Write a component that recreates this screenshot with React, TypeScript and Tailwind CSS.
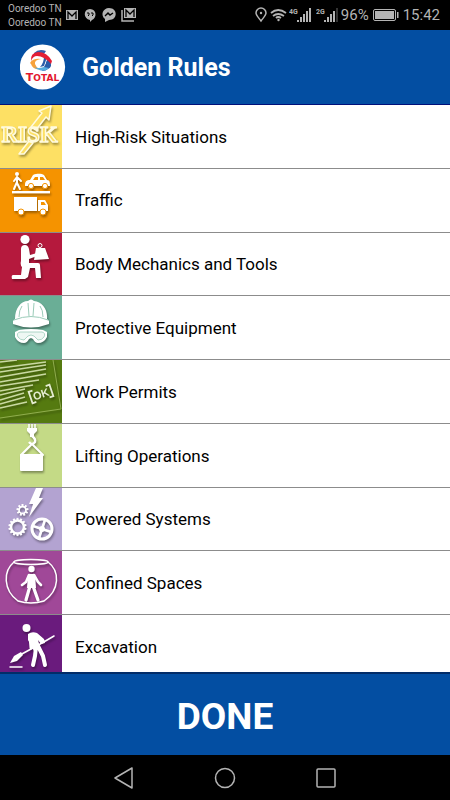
import type { ReactNode } from "react";

type Rule = {
  title: string;
  tile: string;
  icon: ReactNode;
};

function Gear({ x, y, r, teeth, width }: { x: number; y: number; r: number; teeth: number; width: number }) {
  const step = 360 / teeth;
  return (
    <g transform={`translate(${x} ${y})`}>
      <circle r={r} fill="none" stroke="white" strokeWidth={width} />
      {Array.from({ length: teeth }, (_, i) => (
        <rect key={i} x="-1" y={-r - 2.6} width="2" height="2.6" fill="white" transform={`rotate(${i * step})`} />
      ))}
    </g>
  );
}

const RISK = (
  <g strokeLinejoin="round">
    <path d="M19 49 29 36 33 38 24 49ZM31 22 42 8 39 6 51 1 49 15 46 12 36 25Z" fill="#fde064" stroke="#fffbe0" strokeWidth="1.5" />
    <text
      x="29.500"
      y="37"
      textAnchor="middle"
      fontFamily="Liberation Serif, serif"
      fontWeight="700"
      fontSize="23"
      fill="#fde064"
      stroke="#fffbe0"
      strokeWidth="1.5"
    >
      RISK
    </text>
  </g>
);

const TRAFFIC = (
  <g fill="white">
    <circle cx="17" cy="5" r="2" />
    <path
      d="M17 8v6l3 6M17 13l-3 7M17 8l-3 4M17 8l4 4"
      fill="none"
      stroke="white"
      strokeWidth="2"
      strokeLinecap="round"
    />
    <path d="M25 16c0-4 2-5 5-5l3-5c5-2 9-1 11 0l3 5c3 0 3 3 3 6H25Z" />
    <path d="M33 11l2-3h3v3ZM40 8h3l2 3h-5Z" fill="#f59300" />
    <circle cx="31" cy="17" r="2.6" stroke="#f59300" />
    <circle cx="45" cy="17" r="2.6" stroke="#f59300" />
    <rect x="12" y="22" width="38" height="2.4" />
    <rect x="14" y="28" width="23" height="14" />
    <path d="M38 31h7l3 5v6H38Z" />
    <path d="M41 33h3l2 3h-5Z" fill="#f59300" />
    <circle cx="21" cy="43" r="3" stroke="#f59300" />
    <circle cx="43" cy="43" r="3" stroke="#f59300" />
  </g>
);

const BODY = (
  <g fill="white">
    <circle cx="25" cy="6.500" r="4.600" />
    <path d="M21 16q0-4 4-4 3 0 4 4l1 6 7-2v3l-8 3v4h9q2 0 2 2l1 13h-5l-1-10h-5l-2 9-3 2H12q-1-4 1-4h8l1-8q-2-2-1-6Z" />
    <path d="M36 15h9l4 11-15 1Z" />
    <circle cx="40" cy="12.500" r="2" fill="none" stroke="white" strokeWidth="1" />
  </g>
);

const HELMET = (
  <g fill="white">
    <path d="M15 23C15 12 21 5 28 5q3-3 6 0c8 1 14 8 13 18l2 2v3q-18 7-36 0v-3Z" />
    <path
      d="M14 24q17-7 34 0M28 7l1 13M34 7l-1 13M22 10q-3 4-3 11M40 10q3 4 3 11"
      fill="none"
      stroke="#9bccb9"
      strokeWidth="1"
    />
    <path d="M19 34q12-2 24 0l4 2v5q-3 6-9 6-3 0-5-4l-2-1-2 1q-2 4-5 4-6 0-9-6v-5Z" />
    <path
      d="M20 36h22q4 1 2 5-2 3-6 3l-4-4-3-1-3 1-4 4q-4 0-6-3-2-4 2-5Z"
      fill="#eef7f3"
      stroke="#9bccb9"
      strokeWidth="0.8"
    />
  </g>
);

const PERMIT = (
  <g fill="none" stroke="#c9d8a2">
    <path
      d="M0 2 17 0M0 8 46 2M0 12 46 5M0 17 46 9M0 22 46 14M0 26 39 20M0 31 33 25M0 35 25 29M0 40 24 33M0 44 25 37M0 48 27 42"
      strokeWidth="1.500"
    />
    <path d="M53 0 61 49 0 58" stroke="#90ad4e" strokeWidth="1" />
    <g transform="translate(41 34) rotate(-19)" stroke="#e4ecd0">
      <path d="M-7-6h-4V6h4M7-6h4V6H7" strokeWidth="1.800" />
      <text
        y="4"
        textAnchor="middle"
        fontFamily="Liberation Sans, sans-serif"
        fontSize="11"
        fontWeight="700"
        fill="#e4ecd0"
        stroke="none"
      >
        OK
      </text>
    </g>
  </g>
);

const LIFTING = (
  <g fill="none" stroke="white" strokeLinejoin="round">
    <path d="M29 0v4M32 0v4M35 0v4" strokeWidth="1.500" />
    <path d="M27 4h10v3l-3 3v3h-4v-3l-3-3Z" fill="white" stroke="none" />
    <path d="M32 12q4 3 3 6-3 4-6 0" strokeWidth="2.400" />
    <path d="M32 20 21 31h22Z" strokeWidth="2" />
    <rect x="20" y="30" width="23" height="17" rx="1" fill="white" stroke="none" />
  </g>
);

const POWERED = (
  <g>
    <path d="M36 0h7l-4 10h4L29 29l4-13h-4Z" fill="white" />
    <Gear x={22.5} y={22} r={3.4} teeth={9} width={1.6} />
    <Gear x={17.5} y={39} r={6.5} teeth={14} width={2.6} />
    <circle cx="42" cy="41" r="10" fill="none" stroke="white" strokeWidth="3" />
    <path d="M33 38 51 44M45 32 39 50" stroke="white" strokeWidth="2.6" />
    <circle cx="42" cy="41" r="3" fill="white" />
  </g>
);

const CONFINED = (
  <g fill="none" stroke="white" strokeLinecap="round">
    <ellipse cx="31" cy="11" rx="17" ry="2.500" strokeWidth="1.500" />
    <path d="M14 11C3 20 3 39 18 50q13 4 26 0C60 39 60 20 48 11" strokeWidth="1.500" />
    <circle cx="31.500" cy="18" r="3.200" fill="white" stroke="none" />
    <path d="M28 23h7l1 14h-9Z" fill="white" stroke="none" />
    <path d="M29 24l-3 7-4 3M34 24l4 7 3 3" strokeWidth="2.600" />
    <path d="M30 35l-4 14M33 35l5 14" strokeWidth="3.200" />
  </g>
);

const EXCAVATION = (
  <g fill="none" stroke="white" strokeLinecap="round" strokeLinejoin="round">
    <circle cx="26.500" cy="13" r="4" fill="white" stroke="none" />
    <path d="M28 19q4-3 9-1l7 6 1 4-4 1-3-4 2 7-6 4-6-11Z" fill="white" stroke="none" />
    <path d="M30 21l1 12M36 20l7 6" strokeWidth="3" />
    <path d="M54 21 42 28 20 40" strokeWidth="1.500" />
    <path d="M21 37l2 3-6 6-7 2 4-7Z" fill="white" stroke="none" />
    <path d="M36 32l-1 9-2 9M38 31l5 10 2 9" strokeWidth="4" />
    <path d="M10 52h12" strokeWidth="1.500" />
  </g>
);

const rules: Rule[] = [
  { title: "High-Risk Situations", tile: "bg-[#fde064]", icon: RISK },
  { title: "Traffic", tile: "bg-[#f59300]", icon: TRAFFIC },
  { title: "Body Mechanics and Tools", tile: "bg-[#b5193d]", icon: BODY },
  { title: "Protective Equipment", tile: "bg-[#6aae96]", icon: HELMET },
  { title: "Work Permits", tile: "bg-[#557a10]", icon: PERMIT },
  { title: "Lifting Operations", tile: "bg-[#c4da86]", icon: LIFTING },
  { title: "Powered Systems", tile: "bg-[#b3a3d1]", icon: POWERED },
  { title: "Confined Spaces", tile: "bg-[#a04898]", icon: CONFINED },
  { title: "Excavation", tile: "bg-[#6a1b7d]", icon: EXCAVATION },
];

function Signal({ label, dim }: { label: string; dim?: boolean }) {
  return (
    <svg width="23" height="16" viewBox="0 0 23 16" fill="#b4b4b4">
      <text x="0" y="7" fontFamily="Roboto, sans-serif" fontWeight="700" fontSize="7">
        {label}
      </text>
      <rect x="8" y="13" width="2" height="2" />
      <rect x="11" y="10" width="2" height="5" />
      <rect x="14" y="7" width="2" height="8" />
      <rect x="17" y="4" width="2" height="11" />
      <rect x="20" y="1" width="2" height="14" fill={dim ? "#333333" : "#b4b4b4"} />
    </svg>
  );
}

function StatusBar() {
  return (
    <div className="flex h-[30px] shrink-0 items-center justify-between bg-black pr-2.5 pl-2 text-[#b4b4b4]">
      <div className="flex items-center gap-1">
        <div className="pt-0.5 text-[10px] leading-[14px]">
          <div>Ooredoo TN</div>
          <div>Ooredoo TN</div>
        </div>
        <svg width="72" height="16" viewBox="0 0 72 16" fill="#b4b4b4">
          <path d="M0 3h12v10H0Z" />
          <path d="M2 12V5l4 4 4-4v7" fill="none" stroke="black" strokeWidth="1.300" />
          <path d="M24 2c7 0 7 9 2 11l-2 2v-2c-7-1-7-11 0-11Z" />
          <path d="M21 6h2v2l-1 1M25 6h2v2l-1 1" fill="none" stroke="black" />
          <path d="M43 1c9 0 9 12 0 12l-4 2v-3c-5-4-2-11 4-11Z" />
          <path d="M39 9l3-3 2 2 3-2" fill="none" stroke="black" strokeWidth="1.400" />
          <path d="M58 1h12v10H58Z" />
          <path d="M60 10V3l4 4 4-4v7" fill="none" stroke="black" strokeWidth="1.300" />
          <path d="M56 3v11h12" fill="none" stroke="#b4b4b4" strokeWidth="1.500" />
        </svg>
      </div>
      <div className="flex items-center">
        <svg width="34" height="16" viewBox="0 0 34 16" fill="none" stroke="#b4b4b4" strokeWidth="1.500">
          <path d="M6 14C3 10 1 8 1 6a5 5 0 0 1 10 0c0 2-2 4-5 8Z" />
          <circle cx="6" cy="6" r="1.200" fill="#b4b4b4" stroke="none" />
          <path d="M16 6q7-6 15 0M18 9q5-4 11 0M21 11q2-2 5 0" strokeWidth="1.800" />
          <circle cx="23.500" cy="13" r="1.200" fill="#b4b4b4" stroke="none" />
        </svg>
        <div className="flex gap-1">
          <Signal label="4G" />
          <Signal label="2G" dim />
        </div>
        <span className="ml-0.5 text-[15px] leading-5">96%</span>
        <svg className="mx-1" width="26" height="14" viewBox="0 0 26 14">
          <rect x="0.500" y="1.500" width="22" height="11" rx="1.500" fill="none" stroke="#b4b4b4" />
          <rect x="2" y="3" width="19" height="8" fill="#b4b4b4" />
          <rect x="24" y="4" width="1.500" height="6" fill="#b4b4b4" />
        </svg>
        <span className="text-[15px] leading-5">15:42</span>
      </div>
    </div>
  );
}

function Logo() {
  return (
    <svg width="46" height="46" viewBox="0 0 46 46">
      <circle cx="22.500" cy="23" r="22.600" fill="white" />
      <path d="M14 9q5-5 12-2l-2 3q-6-1-10 2Z" fill="#3b5ba9" />
      <path d="M24 10q4 2 6 6 3 7-2 9-2 2-6 2l4-8q1-6-2-9Z" fill="#2a5ca8" />
      <path d="M21 12l7 2-5 10-5-2Z" fill="white" />
      <path d="M24 12l3 1-3 9-4 1q4-4 4-11Z" fill="#2a5ca8" />
      <path d="M11 17q-1-8 7-9 9 0 14 9l-1 3q-7-8-14-8-4 0-6 5Z" fill="#e41e35" />
      <path d="M10 19q3-5 11-4-7 1-6 5 1 3 4 5-6 1-8-5Z" fill="#f7a23b" />
      <path d="M14 23q4 2 10 0l5 1q-6 6-15-1Z" fill="#58aee0" />
      <text
        x="22.500"
        y="37"
        textAnchor="middle"
        fontFamily="DejaVu Sans, sans-serif"
        fontWeight="700"
        fontSize="9"
        fill="#e2182f"
      >
        <tspan fontSize="11">T</tspan>OTAL
      </text>
    </svg>
  );
}

export default function App() {
  return (
    <div className="flex h-screen flex-col overflow-hidden bg-white font-[Roboto,sans-serif]">
      <StatusBar />
      <header className="flex h-[75px] shrink-0 items-center gap-4 border-b border-[#00107a] bg-[#034ea2] px-5 text-white">
        <Logo />
        <h1 className="pt-0.5 text-[25px] leading-8 font-bold">Golden Rules</h1>
      </header>

      <main className="min-h-0 flex-1 overflow-y-auto [scrollbar-width:none]">
        <ul className="grid h-[574px] auto-rows-fr">
          {rules.map((rule) => (
            <li key={rule.title} className="border-b border-[#8c8c8c]">
              <button className="flex h-full w-full items-center gap-[13px] text-left text-[17px] text-black">
                <span className={`h-full w-[62px] shrink-0 overflow-hidden ${rule.tile}`}>
                  <svg
                    className="drop-shadow-[1px_2px_1px_rgba(0,0,0,0.35)]"
                    width="62"
                    height="63"
                    viewBox="0 0 62 63"
                    aria-hidden="true"
                  >
                    {rule.icon}
                  </svg>
                </span>
                <span className="pt-0.5">{rule.title}</span>
              </button>
            </li>
          ))}
        </ul>
      </main>

      <button className="h-[83px] shrink-0 border-t-2 border-[#022c68] bg-[#034ea2] pt-1 text-[37px] font-bold text-white">
        DONE
      </button>

      <nav className="flex h-[45px] shrink-0 items-center justify-center gap-20 bg-black">
        <button aria-label="Back">
          <svg width="20" height="22" viewBox="0 0 20 22" fill="none" stroke="#b4b4b4" strokeWidth="1.500">
            <path d="M18 1v20L1 11Z" strokeLinejoin="round" />
          </svg>
        </button>
        <button aria-label="Home">
          <svg width="22" height="22" viewBox="0 0 22 22" fill="none" stroke="#b4b4b4" strokeWidth="1.500">
            <circle cx="11" cy="11" r="9.500" />
          </svg>
        </button>
        <button aria-label="Recent apps">
          <svg width="20" height="20" viewBox="0 0 20 20" fill="none" stroke="#b4b4b4" strokeWidth="1.500">
            <rect x="1" y="1" width="18" height="18" rx="1" />
          </svg>
        </button>
      </nav>
    </div>
  );
}
